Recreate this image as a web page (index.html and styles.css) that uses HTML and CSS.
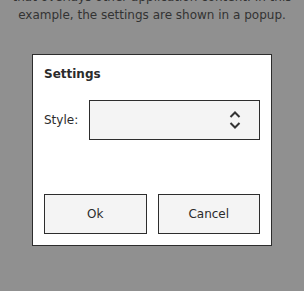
FILE: index.html
```html
<!DOCTYPE html>
<html lang="en">
<head>
  <meta charset="UTF-8">
  <title>Settings popup</title>
  <link rel="stylesheet" href="styles.css">
</head>
<body>

  <!-- application content behind the popup -->
  <p class="intro">
    that overlays other application content. In this<br>
    example, the settings are shown in a popup.
  </p>

  <!-- popup -->
  <div class="popup">
    <div class="popup-title">Settings</div>

    <div class="field">
      <span class="field-label">Style:</span>
      <div class="combo">
        <svg class="combo-arrows" width="14" height="22" viewBox="0 0 14 22">
          <path d="M2.5 8 L7 3.5 L11.5 8" fill="none" stroke="#333" stroke-width="2"/>
          <path d="M2.5 14 L7 18.5 L11.5 14" fill="none" stroke="#333" stroke-width="2"/>
        </svg>
      </div>
    </div>

    <div class="buttons">
      <button class="btn">Ok</button>
      <button class="btn">Cancel</button>
    </div>
  </div>

</body>
</html>
```

FILE: styles.css
```css
/* reset & basic */
* { box-sizing: border-box; margin: 0; padding: 0; }
body {
  font-family: "DejaVu Sans", sans-serif;
  background: #909090;
  color: #2b2b2b;
  width: 304px;
  height: 291px;
  overflow: hidden;
}

/* background text (scrolled, first line cut) */
.intro {
  margin-top: -12px;
  text-align: center;
  font-size: 12px;
  line-height: 18px;
  color: #333;
}

/* popup box */
.popup {
  width: 240px;
  margin: 30px auto 0;
  background: #fff;
  border: 1px solid #2d2d2d;
  padding: 11px;
}
.popup-title {
  font-weight: bold;
  font-size: 12px;
  line-height: 14px;
  margin-top: 1px;
}

/* style row */
.field {
  display: flex;
  align-items: center;
  margin-top: 19px;
}
.field-label {
  font-size: 12px;
  width: 45px;
}
.combo {
  flex: 1;
  height: 40px;
  background: #f4f4f4;
  border: 1px solid #2d2d2d;
  display: flex;
  align-items: center;
  justify-content: flex-end;
  padding-right: 17px;
}

/* buttons */
.buttons {
  display: flex;
  gap: 11px;
  margin-top: 54px;
}
.btn {
  flex: 1;
  height: 40px;
  background: #f4f4f4;
  border: 1px solid #2d2d2d;
  font-family: "DejaVu Sans", sans-serif;
  font-size: 12px;
  color: #2b2b2b;
}
```
